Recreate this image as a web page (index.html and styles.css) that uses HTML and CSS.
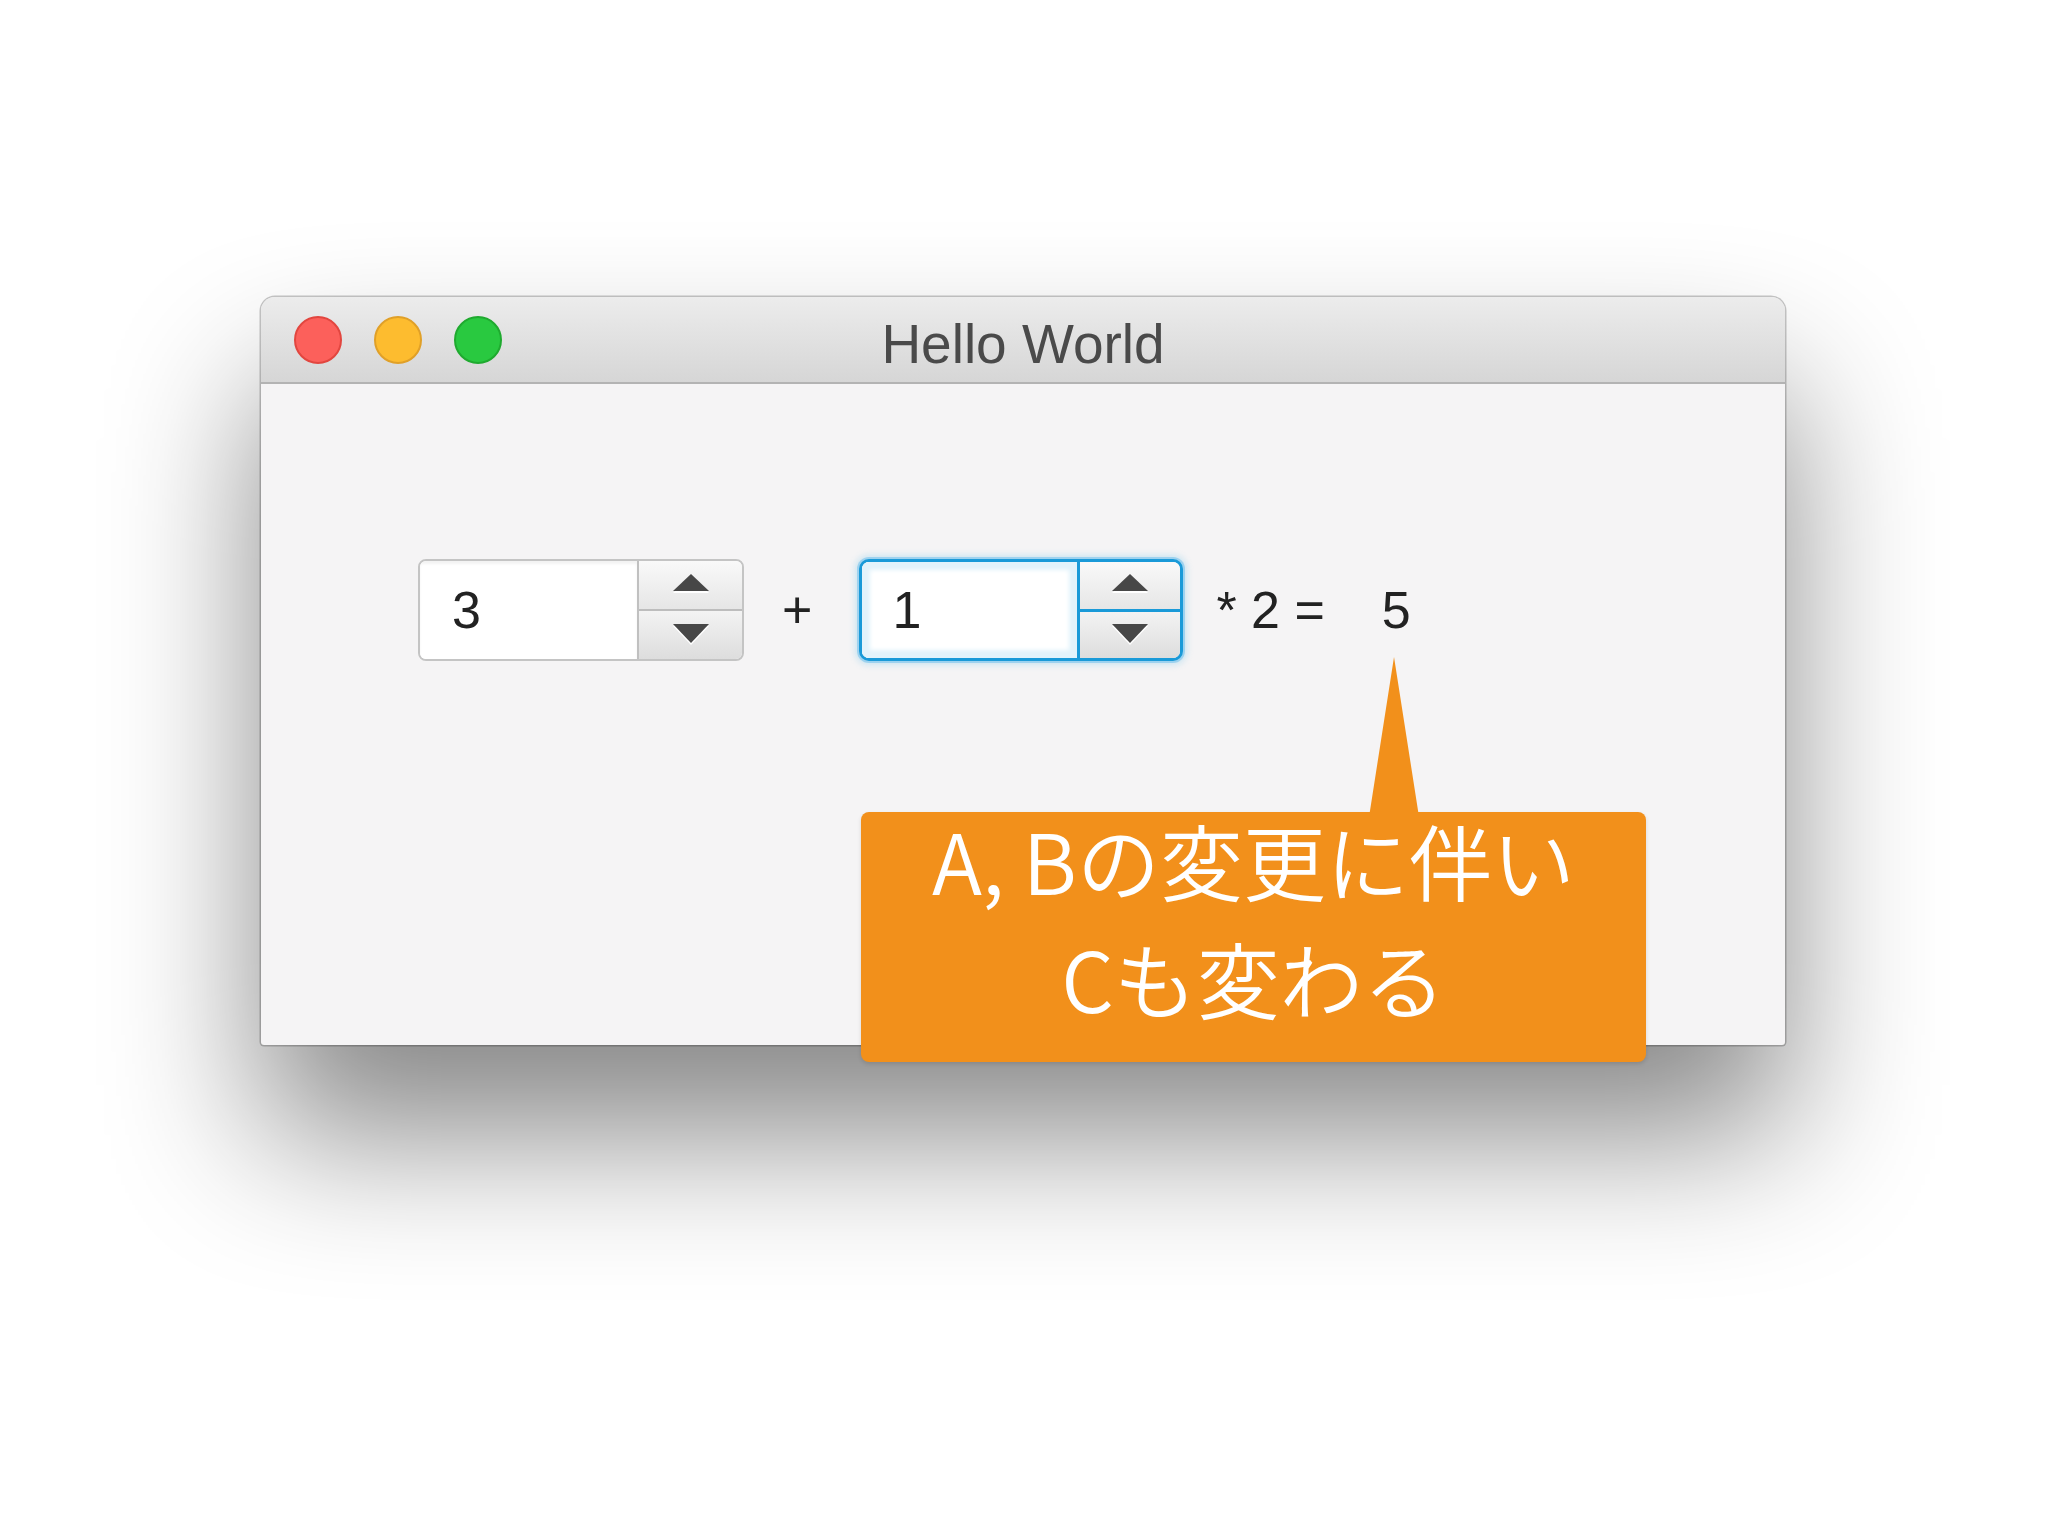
FILE: index.html
```html
<!DOCTYPE html>
<html lang="ja">
<head>
<meta charset="utf-8">
<title>Hello World</title>
<link rel="stylesheet" href="styles.css">
</head>
<body>
<div class="stage">
  <div class="window">
    <div class="titlebar">
      <div class="lights">
        <span class="light red"></span>
        <span class="light yellow"></span>
        <span class="light green"></span>
      </div>
      <div class="title">Hello World</div>
      <div></div>
    </div>
    <div class="content">
      <div class="row">
        <div class="spinner">
          <div class="field">3</div>
          <div class="buttons">
            <div class="btn up"><svg width="38" height="22" viewBox="0 0 38 22"><polygon points="1,19 19,2 37,19" fill="#ffffff"/><polygon points="1,17 19,0 37,17" fill="#474747"/></svg></div>
            <div class="btn down"><svg width="38" height="22" viewBox="0 0 38 22"><polygon points="1,2 37,2 19,21" fill="#ffffff"/><polygon points="1,0 37,0 19,19" fill="#474747"/></svg></div>
          </div>
        </div>
        <span class="op plus">+</span>
        <div class="spinner focused">
          <div class="field">1</div>
          <div class="buttons">
            <div class="btn up"><svg width="38" height="22" viewBox="0 0 38 22"><polygon points="1,19 19,2 37,19" fill="#ffffff"/><polygon points="1,17 19,0 37,17" fill="#474747"/></svg></div>
            <div class="btn down"><svg width="38" height="22" viewBox="0 0 38 22"><polygon points="1,2 37,2 19,21" fill="#ffffff"/><polygon points="1,0 37,0 19,19" fill="#474747"/></svg></div>
          </div>
        </div>
        <span class="op times">* 2 =</span>
        <span class="op result">5</span>
      </div>
    </div>
    <div class="callout">
      <div class="pointer"></div>
      <p class="callout-text">A, Bの変更に伴い<br>Cも変わる</p>
    </div>
  </div>
</div>
</body>
</html>
```
FILE: styles.css
```css
html, body {
  margin: 0;
  padding: 0;
  background: #ffffff;
}

.stage {
  width: 2048px;
  height: 1536px;
  padding: 297px 0 0 261px;
  box-sizing: border-box;
  overflow: hidden;
}

.window {
  position: relative;
  width: 1524px;
  height: 748px;
  background: #f5f4f5;
  border-radius: 14px 14px 3px 3px;
  box-shadow: 0 0 0 1.5px rgba(0, 0, 0, 0.22), 0 90px 150px rgba(0, 0, 0, 0.47);
}

.titlebar {
  height: 85px;
  border-bottom: 2px solid #b3b3b3;
  border-radius: 14px 14px 0 0;
  background: linear-gradient(#ececec, #d6d6d6);
  display: grid;
  grid-template-columns: 1fr auto 1fr;
  align-items: center;
}

.lights {
  display: flex;
  gap: 32px;
  padding-left: 33px;
}

.light {
  width: 48px;
  height: 48px;
  border-radius: 50%;
  box-sizing: border-box;
}

.red { background: #fc605b; border: 2px solid #e2463f; }
.yellow { background: #fdbc2f; border: 2px solid #e0a028; }
.green { background: #29c940; border: 2px solid #1faa2f; }

.title {
  font-family: "Liberation Sans", Arial, sans-serif;
  font-size: 55px;
  color: #4a4a4a;
  line-height: 1;
  padding-top: 9px;
}

.content {
  padding: 175px 0 0 157px;
}

.row {
  display: flex;
  align-items: center;
  font-family: "Liberation Sans", Arial, sans-serif;
  font-size: 52px;
  color: #222222;
}

.spinner {
  display: flex;
  width: 326px;
  height: 102px;
  box-sizing: border-box;
  border: 2px solid #c4c4c4;
  border-radius: 8px;
  background: #ffffff;
  overflow: hidden;
}

.field {
  flex: 1;
  display: flex;
  align-items: center;
  padding-left: 32px;
  background: #ffffff;
  box-shadow: inset 0 3px 3px rgba(0, 0, 0, 0.05);
}

.buttons {
  width: 103px;
  display: flex;
  flex-direction: column;
  border-left: 2px solid #c0c0c0;
}

.btn {
  flex: 1;
  display: flex;
  align-items: center;
  justify-content: center;
}

.btn.up {
  background: linear-gradient(#f9f9f9, #e6e6e6);
  border-bottom: 2px solid #bdbdbd;
}

.btn.down {
  background: linear-gradient(#f3f3f3, #dddddd);
}

.btn svg {
  display: block;
}

.spinner.focused {
  width: 324px;
  border: 3px solid #1a9ad8;
  border-radius: 10px;
  box-shadow: 0 0 0 2px rgba(90, 185, 235, 0.45), 0 0 6px 4px rgba(110, 195, 235, 0.3);
}

.spinner.focused .field {
  padding-left: 30px;
  box-shadow: inset 0 0 4px 8px #e2f3fb;
}

.spinner.focused .buttons {
  width: 100px;
  border-left: 3px solid #1a9ad8;
}

.spinner.focused .btn.up {
  border-bottom: 3px solid #1a9ad8;
}

.op {
  line-height: 1;
  white-space: pre;
}

.plus { margin: 0 47px 0 38px; }
.times { margin-left: 33px; }
.result { margin-left: 57px; }

.callout {
  position: absolute;
  left: 600px;
  top: 515px;
  width: 785px;
  height: 250px;
  background: #f2901b;
  border-radius: 8px;
  box-shadow: 0 2px 4px rgba(0, 0, 0, 0.12);
}

.pointer {
  position: absolute;
  left: 508px;
  top: -155px;
  width: 50px;
  height: 160px;
  background: #f2901b;
  clip-path: polygon(50% 0, 100% 100%, 0 100%);
}

.callout-text {
  position: relative;
  margin: -12px 0 0 0;
  text-align: center;
  color: #ffffff;
  font-family: "Noto Sans CJK JP", sans-serif;
  font-weight: 350;
  font-size: 83px;
  line-height: 118px;
}
```
